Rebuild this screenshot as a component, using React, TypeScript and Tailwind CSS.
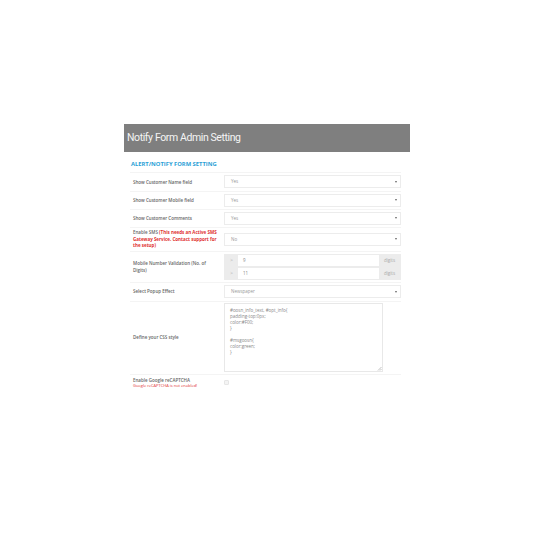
const font = { fontFamily: '"Open Sans", sans-serif' };

function Caret() {
  return <span className="ml-auto mr-[3px] h-0 w-0 border-x-[1.5px] border-t-[2px] border-x-transparent border-t-[#666]" />;
}

function SelectBox({ value }: { value: string }) {
  return (
    <div className="flex h-[13px] w-[177px] items-center border border-[#ececec] bg-white pl-[6px] text-[4.5px] text-[#999]">
      {value}
      <Caret />
    </div>
  );
}

function DigitsInput({ value }: { value: string }) {
  return (
    <div className="flex h-[13px] w-[177px] items-center border border-[#ececec] text-[4.5px] text-[#888]">
      <div className="flex h-full w-[13px] items-center justify-center bg-[#ececec] text-[#aaa]">&gt;</div>
      <div className="flex-1 pl-[5px]">{value}</div>
      <div className="flex h-full w-[21px] items-center justify-center bg-[#ececec] text-[#aaa]">digits</div>
    </div>
  );
}

function Row({ className, label, children }: { className: string; label: React.ReactNode; children: React.ReactNode }) {
  return (
    <div className={`flex items-center border-t border-[#f4f4f4] ${className}`}>
      <div className="w-[94px] pl-[3px] pr-[6px] text-[4.5px] font-semibold leading-[6.5px] text-[#666]">{label}</div>
      <div className="flex flex-col">{children}</div>
    </div>
  );
}

export default function App() {
  return (
    <div className="h-[535px] w-[535px] overflow-hidden bg-white pl-[124px] pt-[124px]" style={font}>
      {/* Header bar */}
      <div
        className="flex h-[28px] w-[286px] items-center bg-[#7f7f7f] pl-[3px] text-[10.5px] tracking-[-0.4px] text-[#f4f4f4]"
        style={{ fontFamily: 'Roboto, sans-serif' }}
      >
        Notify Form Admin Setting
      </div>

      <div className="w-[277px] pl-[6px]">
        <div className="flex h-[20px] items-end pb-[3px] pl-[1px] text-[5.8px] font-bold text-[#2a9fd6]">
          ALERT/NOTIFY FORM SETTING
        </div>

        <Row className="h-[18.5px]" label="Show Customer Name field">
          <SelectBox value="Yes" />
        </Row>
        <Row className="h-[18px]" label="Show Customer Mobile field">
          <SelectBox value="Yes" />
        </Row>
        <Row className="h-[18px]" label="Show Customer Comments">
          <SelectBox value="Yes" />
        </Row>
        <Row
          className="h-[24px]"
          label={
            <>
              Enable SMS <span className="font-bold text-[#e03030]">(This needs an Active SMS Gateway Service. Contact support for the setup)</span>
            </>
          }
        >
          <SelectBox value="No" />
        </Row>
        <Row className="h-[31px]" label="Mobile Number Validation (No. of Digits)">
          <DigitsInput value="9" />
          <DigitsInput value="11" />
        </Row>
        <Row className="h-[19px]" label="Select Popup Effect">
          <SelectBox value="Newspaper" />
        </Row>
        <Row className="h-[73px]" label="Define your CSS style">
          <div className="relative h-[69px] w-[159px] whitespace-pre border border-[#e8e8e8] pl-[5px] pt-[3px] text-[4.5px] leading-[6px] text-[#888]">
            {"#oosn_info_text, #opt_info{\npadding-top:0px;\ncolor:#F00;\n}\n\n#msgoosn{\ncolor:green;\n}"}
            <svg className="absolute bottom-0 right-0" width="5" height="5" viewBox="0 0 5 5">
              <path d="M1 4.5 4.5 1M3 4.5 4.5 3" stroke="#999" strokeWidth="0.6" />
            </svg>
          </div>
        </Row>
        <div className="flex h-[17px] items-center border-t border-[#f4f4f4]">
          <div className="w-[94px] pl-[3px] text-[4.5px] leading-[6px]">
            <div className="font-semibold text-[#666]">Enable Google reCAPTCHA</div>
            <div className="text-[4px] text-[#e03030]">Google reCAPTCHA is not enabled!</div>
          </div>
          <div className="h-[5px] w-[5px] rounded-[1px] border border-[#e6e6e6] bg-[#f4f4f4]" />
        </div>
      </div>
    </div>
  );
}
